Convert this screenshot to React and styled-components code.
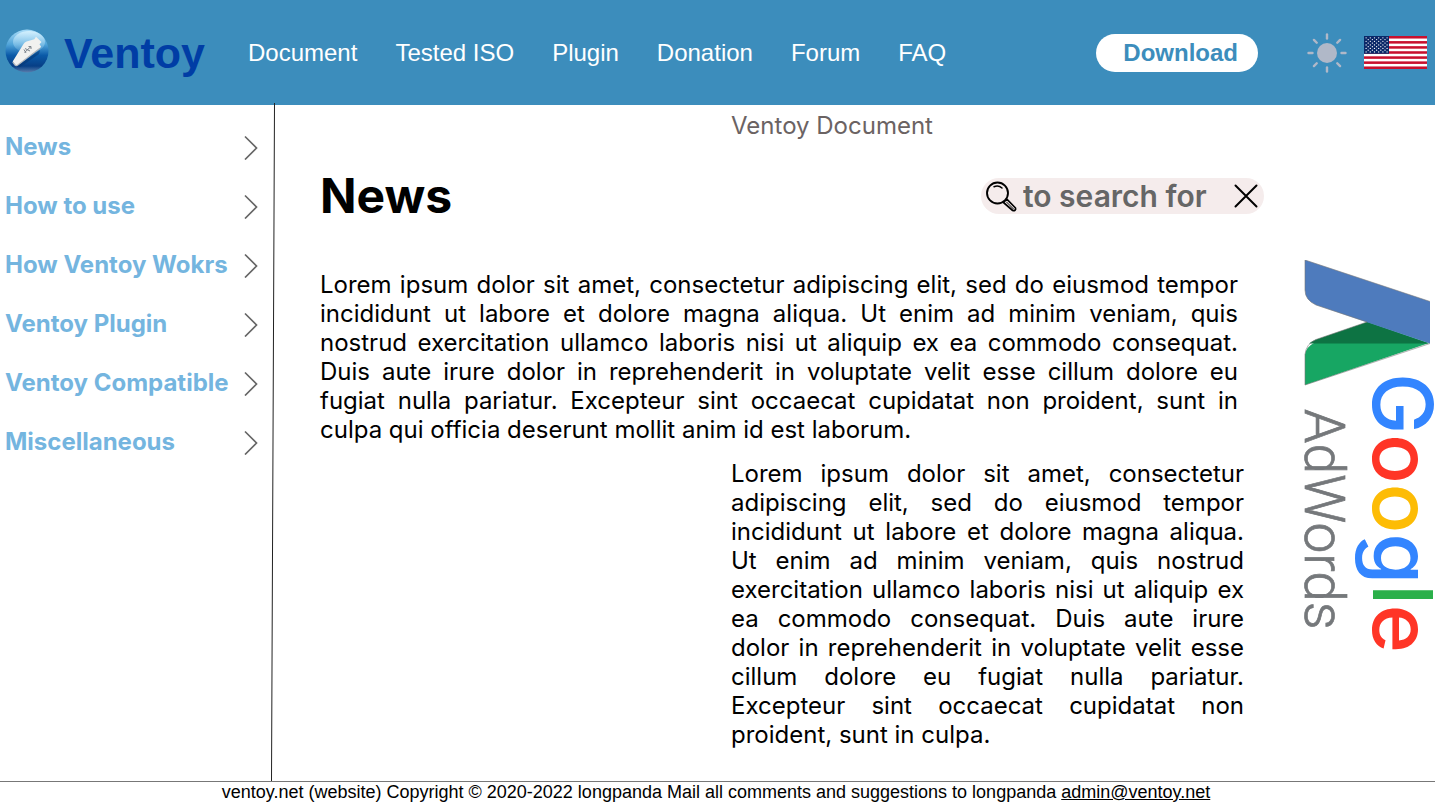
import React from "react";
import styled, { createGlobalStyle } from "styled-components";

const GlobalStyle = createGlobalStyle`
  * { box-sizing: border-box; }
  body { margin: 0; background: #fff; color: #000; font-family: Inter, sans-serif; }
  h1, p { margin: 0; }
  a { color: inherit; text-decoration: none; }
  button { border: 0; padding: 0; background: none; color: inherit; cursor: pointer; }
  svg { display: block; flex: none; }
`;

const Page = styled.div`
  display: flex;
  flex-direction: column;
  min-height: 100vh;
`;

const Header = styled.header`
  display: flex;
  align-items: center;
  height: 105px;
  padding: 0 8px 0 5px;
  background: #3c8dbc;
  color: #fff;
  font: 24px/28px "Liberation Sans", Arial, sans-serif;
`;

const Brand = styled.a`
  display: flex;
  align-items: flex-start;
  gap: 15px;
  width: 243px;
  color: #003da5;
  font-size: 43px;
  font-weight: 700;
  line-height: 48px;
`;

const TopNav = styled.nav`
  display: flex;
  flex: 1;
  gap: 38px;
  white-space: nowrap;
`;

const DownloadButton = styled.button`
  height: 38px;
  padding: 0 20px 0 27px;
  border-radius: 19px;
  background: #fff;
  color: #3c8dbc;
  font: 700 24px/28px "Liberation Sans", Arial, sans-serif;
`;

const HeaderTools = styled.div`
  display: flex;
  align-items: center;
  gap: 17px;
  margin-left: 49px;
`;

const Body = styled.div`
  display: flex;
  flex: 1;
`;

const Sidebar = styled.nav`
  display: flex;
  flex-direction: column;
  gap: 30px;
  width: 271px;
  padding: 27px 13px 27px 5px;
`;

const SideLink = styled.a`
  display: flex;
  align-items: center;
  justify-content: space-between;
  height: 29px;
  color: #74b5df;
  font-size: 24px;
  font-weight: 700;
  line-height: 29px;
  white-space: nowrap;
`;

const Divider = styled.svg`
  position: relative;
  width: 4px;
  margin-top: -2px;
`;

const Main = styled.main`
  flex: 1;
  min-width: 0;
  padding: 6px 0 28px 45px;
  font-size: 24px;
  line-height: 29px;
`;

const Caption = styled.p`
  margin-left: 411px;
  color: #6b6363;
`;

const TitleRow = styled.div`
  display: flex;
  align-items: center;
  justify-content: space-between;
  margin: 27px 0 45px;
`;

const Title = styled.h1`
  font-size: 48px;
  font-weight: 700;
  line-height: 58px;
`;

const SearchBox = styled.form`
  display: flex;
  align-items: center;
  gap: 6px;
  width: 283px;
  height: 36px;
  padding: 0 6px 0 5px;
  border-radius: 18px;
  background: #f5ecec;
`;

const SearchInput = styled.input`
  flex: 1;
  min-width: 0;
  height: 36px;
  padding: 0;
  border: 0;
  outline: 0;
  background: none;
  color: #666;
  font: 600 30px/36px Inter, sans-serif;
  &::placeholder { color: #666; opacity: 1; }
`;

const Paragraph = styled.p`
  margin: ${(p) => (p.$indented ? "15px 20px 0 411px" : "0 26px 0 0")};
  text-align: justify;
`;

const Ad = styled.aside`
  width: 171px;
  padding: 155px 0 0 24px;
`;

const Footer = styled.footer`
  height: 26px;
  padding-right: 3px;
  border-top: 1px solid #777;
  font: 18px/21px "Liberation Sans", Arial, sans-serif;
  text-align: center;
  a { text-decoration: underline; }
`;

const topLinks = ["Document", "Tested ISO", "Plugin", "Donation", "Forum", "FAQ"];
const sideLinks = ["News", "How to use", "How Ventoy Wokrs", "Ventoy Plugin", "Ventoy Compatible", "Miscellaneous"];

const UsbLogo = () => (
  <svg width="44" height="44" viewBox="0 0 44 44" aria-hidden="true">
    <defs>
      <linearGradient id="ball" x1="0" y1="0" x2="0" y2="1">
        <stop offset="0" stopColor="#a9dcf8" />
        <stop offset=".35" stopColor="#4fa3d8" />
        <stop offset=".6" stopColor="#0a5aa8" />
        <stop offset=".85" stopColor="#073f86" />
        <stop offset="1" stopColor="#5a7fae" />
      </linearGradient>
      <linearGradient id="shine" x1="0" y1="0" x2="0" y2="1">
        <stop offset="0" stopColor="#d9f3ff" stopOpacity=".9" />
        <stop offset="1" stopColor="#8fcbee" stopOpacity=".15" />
      </linearGradient>
    </defs>
    <circle cx="22" cy="22" r="21.5" fill="url(#ball)" />
    <ellipse cx="24" cy="13" rx="16" ry="11" fill="url(#shine)" />
    <path d="M12 37.500L35 21L34 25L15 38Z" fill="#04346f" opacity=".5" />
    <path d="M7.700 32.500L18.500 15Q19.500 13.300 21.500 12.600L29.300 10.300L31 7.700L36.500 13L34.500 15.200L36 17.500Q36 18.500 34.300 19.800L12.500 36.300Q11 37 10 35.800Z" fill="#f1f1ef" />
    <path d="M7.700 33L10 36Q11 37 12.500 36.300L35 19.300" fill="none" stroke="#b4b8bc" strokeWidth="1.200" />
    <path d="M19.500 23.500L26 17.500M20 19.500L25 22M19 20.500L21 24M23.500 17.500H26V20" fill="none" stroke="#7b838b" strokeWidth="1" />
  </svg>
);

const Sun = () => (
  <svg width="40" height="40" viewBox="0 0 40 40" fill="#b0b8c8" stroke="#b0b8c8" aria-hidden="true">
    <circle cx="20" cy="20" r="10" stroke="none" />
    {[0, 45, 90, 135, 180, 225, 270, 315].map((a) => (
      <path key={a} d="M20 1.500V5.500" strokeWidth="2.400" strokeLinecap="round" transform={`rotate(${a} 20 20)`} />
    ))}
  </svg>
);

const Flag = () => (
  <svg width="63" height="33" viewBox="0 0 63 33" aria-hidden="true">
    <rect width="63" height="33" fill="#fff" />
    {[0, 1, 2, 3, 4, 5, 6].map((i) => (
      <rect key={i} width="63" height={33 / 13} y={(i * 66) / 13} fill="#c8102e" />
    ))}
    <rect width="25" height="17.770" fill="#0a2868" />
    {Array.from({ length: 9 }, (_, r) =>
      Array.from({ length: r % 2 ? 5 : 6 }, (_, c) => (
        <circle key={`${r}-${c}`} cx={2.1 + (r % 2 ? 2.1 : 0) + c * 4.2} cy={1.8 + r * 1.77} r=".65" fill="#fff" />
      ))
    )}
  </svg>
);

const Chevron = () => (
  <svg width="14" height="26" viewBox="0 0 14 26" fill="none" stroke="#666" strokeWidth="1.700" aria-hidden="true">
    <path d="M1 2.500L12.500 14L1 25.500" />
  </svg>
);

const Magnifier = () => (
  <svg width="31" height="31" viewBox="0 0 31 31" fill="none" stroke="#000" strokeLinecap="round" strokeLinejoin="round" aria-hidden="true">
    <circle cx="11.500" cy="12" r="10.500" strokeWidth="1.900" />
    <path d="M8 5.700Q12.500 3.800 16 7" strokeWidth="1.500" />
    <path d="M17.500 21.500L20.800 18.200L29.500 27Q30 28.500 29 29.300Q28 30 26.700 29.500Z" fill="#f5ecec" strokeWidth="1.700" />
    <path d="M20.500 21L27.500 28" strokeWidth="1" />
  </svg>
);

const Cross = () => (
  <svg width="24" height="24" viewBox="0 0 24 24" stroke="#000" strokeWidth="2" strokeLinecap="round" aria-hidden="true">
    <path d="M1.500 1.500L22.500 22.500M22.500 1.500L1.500 22.500" />
  </svg>
);

const AdWordsLogo = () => (
  <svg width="147" height="392" viewBox="-16 0 147 392" role="img" aria-label="Google AdWords">
    <path d="M1 94.500Q2 87 10 83L64 62L125 83L1 125Z" fill="#17a663" />
    <path d="M5 83.500Q8 81 12 79.500L63 62L125 83.500Z" fill="#0d7343" />
    <path d="M1 0L126 41.500V83.500L12 45Q1 40 1 30Z" fill="#4e7bbd" />
    <path d="M126 83.500L1 125V94.500Q2 84 12 79.500L63 62M126 41.500L1 0V30Q1 40 12 45L63 62" fill="none" stroke="#777" strokeWidth=".6" />
    <text transform="translate(69 113) rotate(90)" fontFamily="Inter, sans-serif" fontSize="82" fontWeight="500">
      <tspan fill="#3385ff">G</tspan>
      <tspan fill="#ff3526">o</tspan>
      <tspan fill="#fdbc05">o</tspan>
      <tspan fill="#3385ff">g</tspan>
      <tspan fill="#2bb04a">l</tspan>
      <tspan fill="#ff3526">e</tspan>
    </text>
    <text transform="translate(1 149) rotate(90)" fontFamily="Roboto, sans-serif" fontSize="55" fontWeight="300" fill="#75787b" stroke="#75787b" strokeWidth=".7">
      AdWords
    </text>
  </svg>
);

export default function App() {
  return (
    <Page>
      <GlobalStyle />
      <Header>
        <Brand href="#">
          <UsbLogo />
          Ventoy
        </Brand>
        <TopNav aria-label="Main">
          {topLinks.map((label) => (
            <a key={label} href="#">{label}</a>
          ))}
        </TopNav>
        <DownloadButton type="button">Download</DownloadButton>
        <HeaderTools>
          <button type="button" aria-label="Toggle theme"><Sun /></button>
          <button type="button" aria-label="Language"><Flag /></button>
        </HeaderTools>
      </Header>
      <Body>
        <Sidebar aria-label="Documentation">
          {sideLinks.map((label) => (
            <SideLink key={label} href="#">
              {label}
              <Chevron />
            </SideLink>
          ))}
        </Sidebar>
        <Divider aria-hidden="true">
          <line x1="3.500" y1="0" x2=".5" y2="100%" stroke="#222" />
        </Divider>
        <Main>
          <Caption>Ventoy Document</Caption>
          <TitleRow>
            <Title>News</Title>
            <SearchBox role="search">
              <Magnifier />
              <SearchInput type="text" aria-label="Search" placeholder="to search for" />
              <button type="reset" aria-label="Clear"><Cross /></button>
            </SearchBox>
          </TitleRow>
          <Paragraph>
            Lorem ipsum dolor sit amet, consectetur adipiscing elit, sed do eiusmod tempor incididunt ut labore et
            dolore magna aliqua. Ut enim ad minim veniam, quis nostrud exercitation ullamco laboris nisi ut aliquip ex
            ea commodo consequat. Duis aute irure dolor in reprehenderit in voluptate velit esse cillum dolore eu
            fugiat nulla pariatur. Excepteur sint occaecat cupidatat non proident, sunt in culpa qui officia deserunt
            mollit anim id est laborum.
          </Paragraph>
          <Paragraph $indented>
            Lorem ipsum dolor sit amet, consectetur adipiscing elit, sed do eiusmod tempor incididunt ut labore et
            dolore magna aliqua. Ut enim ad minim veniam, quis nostrud exercitation ullamco laboris nisi ut aliquip ex
            ea commodo consequat. Duis aute irure dolor in reprehenderit in voluptate velit esse cillum dolore eu
            fugiat nulla pariatur. Excepteur sint occaecat cupidatat non proident, sunt in culpa.
          </Paragraph>
        </Main>
        <Ad aria-label="Advertisement">
          <AdWordsLogo />
        </Ad>
      </Body>
      <Footer>
        ventoy.net (website) Copyright © 2020-2022 longpanda Mail all comments and suggestions to longpanda{" "}
        <a href="mailto:admin@ventoy.net">admin@ventoy.net</a>
      </Footer>
    </Page>
  );
}
